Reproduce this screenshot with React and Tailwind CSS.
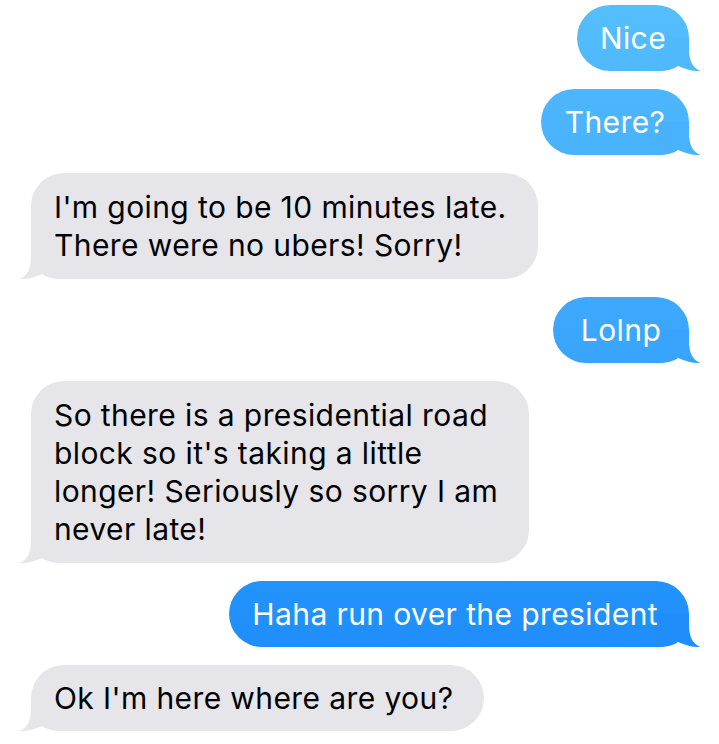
const messages = [
  { id: 1, from: 'me', lines: ['Nice'], w: 'w-[112px] text-center', bg: 'bg-linear-to-b from-[#55befd] to-[#50b9fc]', tail: '#50b9fc' },
  { id: 2, from: 'me', lines: ['There?'], w: 'w-[148px] text-center', bg: 'bg-linear-to-b from-[#4db6fc] to-[#48b2fc]', tail: '#48b2fc' },
  { id: 3, from: 'them', lines: ["I'm going to be 10 minutes late.", 'There were no ubers! Sorry!'] },
  { id: 4, from: 'me', lines: ['Lolnp'], w: 'w-[136px] text-center', bg: 'bg-linear-to-b from-[#3ea9fc] to-[#38a4fc]', tail: '#38a4fc' },
  {
    id: 5,
    from: 'them',
    lines: ['So there is a presidential road', "block so it's taking a little", 'longer! Seriously so sorry I am', 'never late!'],
  },
  { id: 6, from: 'me', lines: ['Haha run over the president'], bg: 'bg-linear-to-b from-[#2393fb] to-[#1f8efb]', tail: '#1f8efb' },
  { id: 7, from: 'them', lines: ["Ok I'm here where are you?"] },
]

// bubble tail, drawn for the left side; mirrored for the right
function Tail({ color, side }) {
  return (
    <svg
      className={`absolute bottom-0 ${side === 'left' ? '-left-[12px]' : '-right-[12px] -scale-x-100'}`}
      width="46"
      height="34"
      viewBox="0 0 46 34"
    >
      <path
        d="M12 0 L12 12 C12 24 8 31 0.5 34 C8 34.5 16 32 23 29 C28 32.5 34 34 42 34 L46 34 L46 0 Z"
        fill={color}
      />
    </svg>
  )
}

function Bubble({ msg }) {
  const mine = msg.from === 'me'
  const multi = msg.lines.length > 1
  return (
    <div className={`flex ${mine ? 'justify-end pr-[30px]' : 'justify-start pl-[31px]'}`}>
      <div
        className={`relative rounded-[33px] leading-[38px] text-[30px] tracking-[0.4px] ${multi ? 'py-[15px]' : 'py-[14px]'} ${
          msg.w ? msg.w : 'pl-[23px] pr-[31px]'
        } ${mine ? `${msg.bg} text-white` : 'bg-[#e5e5ea] text-black'}`}
      >
        <Tail color={mine ? msg.tail : '#e5e5ea'} side={mine ? 'right' : 'left'} />
        <div className="relative whitespace-nowrap">
          {msg.lines.map((line, i) => (
            <div key={i}>{line}</div>
          ))}
        </div>
      </div>
    </div>
  )
}

export default function App() {
  return (
    <div
      className="w-[719px] h-[744px] bg-white overflow-hidden flex flex-col gap-[18px] pt-[5px]"
      style={{ fontFamily: 'Inter, "Noto Sans", sans-serif' }}
    >
      {messages.map((m) => (
        <Bubble key={m.id} msg={m} />
      ))}
    </div>
  )
}
